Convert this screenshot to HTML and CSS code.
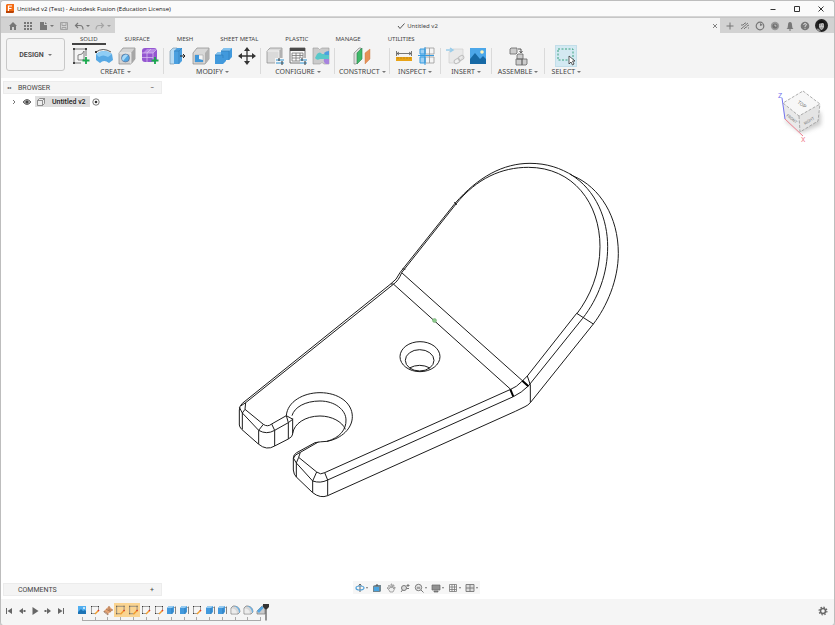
FILE: index.html
```html
<!DOCTYPE html>
<html lang="en">
<head>
<meta charset="utf-8">
<title>Untitled v2 (Test) - Autodesk Fusion (Education License)</title>
<link rel="stylesheet" href="styles.css">
</head>
<body>
<svg class="sprite" aria-hidden="true">
  <symbol id="sketch" viewBox="0 0 20 20">
    <path d="M4 3h10M3 4v12M4 17h6M15 4v6" stroke="#444" stroke-width=".7" fill="none"/>
    <path d="M7 14V9q5 0 6-4v9z" fill="none" stroke="#666" stroke-width=".8"/>
    <path d="M2 2h2v2H2zM14 2h2v2h-2zM2 16h2v2H2z" fill="#444"/>
    <path d="M15 11v7M11.500 14.500h7" stroke="#18a84c" stroke-width="1.800"/>
  </symbol>
  <symbol id="surface" viewBox="0 0 20 20">
    <path d="M2 8q8-6 16 0l1 6-4 3q-5-4-9 0l-4-3z" fill="#58a9e4"/><path d="M2 8q8-6 16 0l-4 3q-5-3-9 0z" fill="#8fcdf5"/>
    <path d="M2 6q7-5 15 0" fill="none" stroke="#333" stroke-width=".8"/><path d="M1 5h2v2H1z" fill="#333"/>
  </symbol>
  <symbol id="hole" viewBox="0 0 20 20">
    <path d="M2 7l4-5h12v11l-4 5H2z" fill="#d4d4d4" stroke="#888" stroke-width=".7"/><path d="M14 7l4-5v11l-4 5z" fill="#a6a6a6"/><path d="M2 7h12v11" fill="none" stroke="#fff" stroke-width=".6"/>
    <circle cx="8.500" cy="12" r="4" fill="#55a7e2" stroke="#557" stroke-width=".5"/><path d="M6 15a4 4 0 015-6z" fill="#a7d8f7"/>
  </symbol>
  <symbol id="form" viewBox="0 0 20 20">
    <rect x="2" y="2" width="15" height="14" rx="3" fill="#9557d1"/><path d="M3 7l4-4h9l-3 4z" fill="#b98ce6"/><path d="M2 7h11M2 11.500h11M7 7v9M13 7v9M13 7l4-4M7 7l4-4" stroke="#dcc5f2" stroke-width=".7"/>
    <path d="M15 11v7M11.500 14.500h7" stroke="#18a84c" stroke-width="1.800"/>
  </symbol>
  <symbol id="presspull" viewBox="0 0 20 20">
    <path d="M2 5l3-3h4v13l-3 3H2z" fill="#b8dbf3" stroke="#6b8ba3" stroke-width=".6"/><path d="M6 5l3-3h5v13l-3 3H6z" fill="#4a9fdf"/><path d="M6 5h5v13M11 5l3-3" fill="none" stroke="#2e78b5" stroke-width=".6"/><path d="M12 10h5M15 8l2 2-2 2" fill="none" stroke="#222" stroke-width="1"/>
  </symbol>
  <symbol id="shell" viewBox="0 0 20 20">
    <path d="M2 7l4-5h12v11l-4 5H2z" fill="#d8d8d8" stroke="#888" stroke-width=".7"/><path d="M14 7l4-5v11l-4 5z" fill="#b0b0b0"/><path d="M4 9h8v7H4z" fill="#f5f5f5" stroke="#999" stroke-width=".5"/><path d="M4 9h4v4l4 1v2H4z" fill="#3f97da"/>
  </symbol>
  <symbol id="combine" viewBox="0 0 20 20">
    <path d="M7 5l3-3h8v9l-3 3h-3v1l-3 3H1V9l3-3h3z" fill="#4199dc"/><path d="M7 5l3-3h8l-3 3zM1 9l3-3h3v3z" fill="#83c2ee"/><path d="M7 5h8v9M1 9h8v3" fill="none" stroke="#2b78b6" stroke-width=".6"/>
  </symbol>
  <symbol id="move" viewBox="0 0 20 20">
    <path d="M10 3v14M3 10h14" stroke="#333" stroke-width="1.300"/><path d="M10 1l3 4H7zM10 19l3-4H7zM1 10l4-3v6zM19 10l-4-3v6z" fill="#333"/>
  </symbol>
  <symbol id="config" viewBox="0 0 20 20">
    <path d="M2 5l3-3h12v12l-3 3H2z" fill="#dadada" stroke="#888" stroke-width=".7"/><path d="M14 5l3-3v12l-3 3z" fill="#b1b1b1"/><path d="M2 5h12v12" fill="none" stroke="#fff" stroke-width=".6"/>
    <path d="M10 12h9v7h-9z" fill="#f5f5f5"/><path d="M11 14h8M11 17h8" stroke="#2d91cf" stroke-width="1"/><path d="M14 12v3M17 15v4" stroke="#333" stroke-width="1"/>
  </symbol>
  <symbol id="table" viewBox="0 0 20 20">
    <path d="M2 2h15v15H2z" fill="#f8f8f8" stroke="#555" stroke-width=".8"/><path d="M2 2h15v3H2z" fill="#4a4a4a"/><path d="M4 7h11v8H4zM4 9.500h11M4 12h11M8 7v8M12 7v8" fill="none" stroke="#777" stroke-width=".8"/>
    <path d="M12 12h8v7h-8z" fill="#f5f5f5"/><path d="M12 14h7M12 17h7" stroke="#2d91cf" stroke-width="1"/><path d="M14 12v3M17 15v4" stroke="#333" stroke-width="1"/>
  </symbol>
  <symbol id="theme" viewBox="0 0 20 20">
    <path d="M2 2h5q1 3 4 0h7v16h-5q-2-3-4 0H2z" fill="#cbcbcb" stroke="#999" stroke-width=".6"/><path d="M6 8q3-3 5 0h7v5H9q-3 2-5-1z" fill="#58c8c9"/><path d="M13 7q2-2 5-2v4h-4z" fill="#4c9ee0"/><path d="M13 13h5v5h-3q-3-2-2-5z" fill="#a783de"/>
  </symbol>
  <symbol id="plane" viewBox="0 0 20 20">
    <path d="M2 7l5-5h2v11l-5 5H2z" fill="#ddd" stroke="#777" stroke-width=".6"/><path d="M5 7l5-5v11l-5 5z" fill="#3fb868" stroke="#25834a" stroke-width=".6"/><path d="M13 7l5-4v10l-5 5z" fill="#e79158" stroke="#c87440" stroke-width=".4"/>
  </symbol>
  <symbol id="measure" viewBox="0 0 20 20">
    <path d="M2 11h16v4H2z" fill="#e8a317"/><path d="M4 11v2M7 11v2M10 11v2M13 11v2M16 11v2" stroke="#a9780f" stroke-width=".6"/><path d="M2.500 5v5M17.500 5v5M3 7.500h14M5 6L3 7.500 5 9M15 6l2 1.500L15 9" stroke="#555" stroke-width=".8" fill="none"/>
  </symbol>
  <symbol id="inspect" viewBox="0 0 20 20">
    <path d="M3 3h5v14H3z" fill="#9fd0f3"/><path d="M8 2h9v6H8zM8 11h9v6H8zM12.500 2v15" fill="none" stroke="#999" stroke-width=".8"/><path d="M3 3h5v5H3zM3 11h5v6H3zM1 9.500h16M8 1v18" fill="none" stroke="#359be0" stroke-width="1"/>
  </symbol>
  <symbol id="link" viewBox="0 0 20 20">
    <g opacity=".5"><path d="M4 6l4-3h10v8l-4 6H4z" fill="#ddd" stroke="#aaa" stroke-width=".7"/><path d="M1 4h6M5 2l3 2-3 2" fill="none" stroke="#42a5df" stroke-width="1.500"/><rect x="9" y="13" width="6" height="4" rx="2" fill="#eee" stroke="#888" transform="rotate(-35 12 15)"/><rect x="13" y="10" width="6" height="4" rx="2" fill="none" stroke="#888" transform="rotate(-35 16 12)"/></g>
  </symbol>
  <symbol id="image" viewBox="0 0 20 20">
    <path d="M2 2h16v16H2z" fill="#4ca7e9"/><path d="M2 13l5-6 5 6 3-3 3 3v5H2z" fill="#176aa6"/><circle cx="14" cy="6" r="1.800" fill="#fff3bc"/>
  </symbol>
  <symbol id="assemble" viewBox="0 0 20 20">
    <g fill="#ccc" stroke="#666" stroke-width=".8"><path d="M2 3l1-1h6v5L8 8H2zM9 9l1-1h5v5H9zM8 13h6v6H8zM14 13h5v5l-1 1h-4z"/></g><path d="M10 3h3v3M11.500 5L13 7l1.500-2" fill="none" stroke="#333" stroke-width=".8"/>
  </symbol>
  <symbol id="select" viewBox="0 0 20 20">
    <path d="M2 3h15v11H2z" fill="none" stroke="#39a17d" stroke-width="1" stroke-dasharray="2 1.500"/><path d="M13 10v8l2-2 1.500 3 1.500-1-1.500-3H19z" fill="#fff" stroke="#333" stroke-width=".8"/>
  </symbol>

  <symbol id="t-image" viewBox="0 0 12 12"><path d="M2 2h8v8H2z" fill="#50aef0"/><path d="M2 8l3-3 2 2 2-1 1 1v3H2z" fill="#1d73b4"/><circle cx="8" cy="4" r="1" fill="#e9f6fd"/></symbol>
  <symbol id="t-sketch" viewBox="0 0 12 12"><path d="M3 2.500h6M2.500 3v6M3 9.500h3M9.500 3v3" fill="none" stroke="#777" stroke-width=".7"/><path d="M2 2h1v1H2zM9 2h1v1H9zM2 9h1v1H2z" fill="#333"/><path d="M6 10l3.500-3.500" stroke="#f19d2e" stroke-width="1.500"/><path d="M9 7l1-1" stroke="#d93b2f" stroke-width="1.500"/></symbol>
  <symbol id="t-plane" viewBox="0 0 12 12"><path d="M2 7l5-5 4 4-5 4z" fill="#e3a274"/><path d="M2 7l4 3v1L2 8zM4 5l5 3M7 2v4h4" fill="none" stroke="#9a6a4b" stroke-width=".7"/></symbol>
  <symbol id="t-extrude" viewBox="0 0 12 12"><path d="M2 4l2-2h5v6l-2 2H2z" fill="#4299dd"/><path d="M2 4l2-2h5L7 4z" fill="#97cbf0"/><path d="M7 4v6" stroke="#2670aa" stroke-width=".7"/><path d="M10.500 3v7M9.500 4l1-1.500" stroke="#555" stroke-width=".7"/></symbol>
  <symbol id="t-fillet" viewBox="0 0 12 12"><path d="M2 10V4l2-2h2q5 1 5 6l-2 2z" fill="#d6d6d6" stroke="#777" stroke-width=".7"/><path d="M5 2h1q5 1 5 6l-1 1q0-5-5-7z" fill="#69b0e5"/><path d="M2.500 4.500q5 0 5.500 5H2.500z" fill="#ececec"/></symbol>
  <symbol id="t-chamfer" viewBox="0 0 12 12"><path d="M2 7l5-5h3v8H2z" fill="#ccc" stroke="#777" stroke-width=".7"/><path d="M2 7l5-5 1.500 2L4 9z" fill="#54a8e6"/></symbol>
</svg>

<div class="window">
  <header class="titlebar">
    <svg class="app-logo" viewBox="0 0 8 9"><path d="M0 1l1-1h7v8L7 9H0z" fill="#f36b14"/><path d="M0 7h8v1L7 9H0z" fill="#b84205"/><path d="M2.500 7V2H6M2.500 4.500h3" fill="none" stroke="#fff" stroke-width="1.200"/></svg>
    <h1 class="app-title">Untitled v2 (Test) - Autodesk Fusion (Education License)</h1>
    <div class="window-controls">
      <button aria-label="Minimize"><svg viewBox="0 0 8 8"><path d="M1.500 4.500h5"/></svg></button>
      <button aria-label="Maximize"><svg viewBox="0 0 8 8"><path d="M1.500 1.500h5v5h-5z"/></svg></button>
      <button aria-label="Close"><svg viewBox="0 0 8 8"><path d="M1.500 1.500l5 5M6.500 1.500l-5 5"/></svg></button>
    </div>
  </header>

  <div class="tabbar">
    <div class="quick">
      <button aria-label="Home"><svg viewBox="0 0 10 10"><path d="M5 1L1 5h1v4h2V6h2v3h2V5h1z" fill="#777"/></svg></button>
      <button aria-label="Data panel"><svg viewBox="0 0 10 10"><path d="M1 1h2v2H1zM4 1h2v2H4zM7 1h2v2H7zM1 4h2v2H1zM4 4h2v2H4zM7 4h2v2H7zM1 7h2v2H1zM4 7h2v2H4zM7 7h2v2H7z" fill="#777"/></svg></button>
      <button class="has-menu" aria-label="File"><svg viewBox="0 0 10 10"><path d="M2 1h4v3h3v5H2zM7 1l2 2H7z" fill="#777"/></svg></button>
      <button aria-label="Save"><svg viewBox="0 0 10 10"><path d="M1.500 1.500h7v7h-7zM3 1.500v3h4v-3M3 8.500v-2h4v2" fill="none" stroke="#a2a2a2"/></svg></button>
      <button class="has-menu" aria-label="Undo"><svg viewBox="0 0 10 10"><path d="M4 2L1.500 4.500 4 7M2 4.500h4q3 0 3 4" fill="none" stroke="#777" stroke-width="1.200"/></svg></button>
      <button class="has-menu faded" aria-label="Redo"><svg viewBox="0 0 10 10"><path d="M6 2l2.500 2.500L6 7M8 4.500H4q-3 0-3 4" fill="none" stroke="#888" stroke-width="1.200"/></svg></button>
    </div>
    <div class="document-tab">
      <svg class="check" viewBox="0 0 8 8"><path d="M1 4l2 2.500L7.500 1.500" fill="none" stroke="#555"/></svg>
      <span>Untitled v2</span>
      <button class="close-tab" aria-label="Close tab"><svg viewBox="0 0 6 6"><path d="M1 1l4 4M5 1L1 5" stroke="#666" stroke-width=".8"/></svg></button>
    </div>
    <div class="account">
      <button aria-label="New tab"><svg viewBox="0 0 10 10"><path d="M5 1.500v7M1.500 5h7" stroke="#777" fill="none"/></svg></button>
      <button aria-label="Offline"><svg viewBox="0 0 10 10"><path d="M1 4h2l2-2h1M1 8l7-6M4 8l2-2h1M7 5l2-1M8 7h1" stroke="#777" fill="none"/></svg></button>
      <button aria-label="Extensions"><svg viewBox="0 0 10 10"><circle cx="5" cy="5" r="3.800" fill="none" stroke="#777" stroke-width="1.200"/><path d="M5 5V2l3 2z" fill="#777"/></svg></button>
      <button aria-label="Job status"><svg viewBox="0 0 10 10"><circle cx="5" cy="5" r="4.200" fill="#999"/><circle cx="5" cy="5" r="2.600" fill="#707070"/><path d="M5 3.500V5h1.500" stroke="#ddd" stroke-width=".8" fill="none"/></svg></button>
      <button aria-label="Notifications"><svg viewBox="0 0 10 10"><path d="M1.500 8q1.500-1 1.500-4 0-3 2-3t2 3q0 3 1.500 4zM4 8.500h2v1H4z" fill="#777"/></svg></button>
      <button aria-label="Help"><svg viewBox="0 0 10 10"><circle cx="5" cy="5" r="4.300" fill="#777"/><path d="M3.700 4q0-1.500 1.400-1.500T6.400 4Q6.300 4.600 5 5.200V6M5 6.800v1" stroke="#e5e5e5" fill="none" stroke-width=".9"/></svg></button>
      <button class="avatar" aria-label="Profile"><svg viewBox="0 0 13 13"><circle cx="6.500" cy="6.500" r="6.500" fill="#222"/><path d="M4 4q2-2 5 0v4q-1 3-2.500 3T4 8z" fill="#c2c2c2"/><path d="M3 5q0-4 4-3.500Q10 2 10 6L8 4z" fill="#111"/><path d="M4.500 6h1.500M7 6h1.500M5.500 9h2" stroke="#444" stroke-width=".6"/><path d="M1 10q2-1 3 0l2 2.500Q3 13 1 10z" fill="#888"/></svg></button>
    </div>
  </div>

  <div class="ribbon">
    <button class="workspace">DESIGN<i class="caret"></i></button>
    <div class="ribbon-main">
      <nav class="ribbon-tabs">
        <a class="active" href="#">SOLID</a><a href="#">SURFACE</a><a href="#">MESH</a><a href="#">SHEET METAL</a><a href="#">PLASTIC</a><a href="#">MANAGE</a><a href="#">UTILITIES</a>
      </nav>
      <div class="tool-groups">
        <section class="group"><div class="tools"><button aria-label="Sketch"><svg><use href="#sketch"/></svg></button><button aria-label="Revolve"><svg><use href="#surface"/></svg></button><button aria-label="Hole"><svg><use href="#hole"/></svg></button><button aria-label="Form"><svg><use href="#form"/></svg></button></div><button class="label">CREATE<i class="caret"></i></button></section>
        <section class="group"><div class="tools"><button aria-label="Press pull"><svg><use href="#presspull"/></svg></button><button aria-label="Shell"><svg><use href="#shell"/></svg></button><button aria-label="Combine"><svg><use href="#combine"/></svg></button><button aria-label="Move"><svg><use href="#move"/></svg></button></div><button class="label">MODIFY<i class="caret"></i></button></section>
        <section class="group"><div class="tools"><button aria-label="Configure model"><svg><use href="#config"/></svg></button><button aria-label="Configuration table"><svg><use href="#table"/></svg></button><button aria-label="Theme table"><svg><use href="#theme"/></svg></button></div><button class="label">CONFIGURE<i class="caret"></i></button></section>
        <section class="group single"><div class="tools"><button aria-label="Offset plane"><svg><use href="#plane"/></svg></button></div><button class="label">CONSTRUCT<i class="caret"></i></button></section>
        <section class="group"><div class="tools"><button aria-label="Measure"><svg><use href="#measure"/></svg></button><button aria-label="Section"><svg><use href="#inspect"/></svg></button></div><button class="label">INSPECT<i class="caret"></i></button></section>
        <section class="group"><div class="tools"><button aria-label="Insert derive"><svg><use href="#link"/></svg></button><button aria-label="Canvas"><svg><use href="#image"/></svg></button></div><button class="label">INSERT<i class="caret"></i></button></section>
        <section class="group single"><div class="tools"><button aria-label="Joint"><svg><use href="#assemble"/></svg></button></div><button class="label">ASSEMBLE<i class="caret"></i></button></section>
        <section class="group last"><div class="tools"><button class="selected" aria-label="Select"><svg><use href="#select"/></svg></button></div><button class="label">SELECT<i class="caret"></i></button></section>
      </div>
    </div>
  </div>

  <main class="viewport">
    <svg class="model" viewBox="1 78 833 521" role="img" aria-label="Bracket model">
      <g class="edges">
        <!-- feet and open slot -->
        <g transform="translate(225 370) scale(.33333)">
          <path d="M497 -258L52 100Q43 108 43 120V165Q43 170 50 178L100 222Q125 243 149 228L190 207Q203 200 203 192V145"/>
          <path d="M505 -257L62 98L47 108M62 98L60 118L115 163Q128 172 140 162L184 137"/>
          <path d="M43 112L52 129L101 181Q125 195 149 181L190 158L203 148M60 118L52 129V178M115 163L101 181V222M140 162L149 181V228M184 137L190 158V207M184 137L202 147"/>
          <path d="M184 137C187 95 235 68 285 68C340 68 382 98 382 140C382 175 350 206 306 214Q285 215 270 218L215 248Q205 254 205 264V300Q206 314 215 322L263 368Q286 386 308 377L871 124"/>
          <path d="M201 137C208 112 240 93 285 93C330 93 363 120 363 150C364 178 345 203 306 214"/>
          <path d="M203 190C207 162 240 138 285 138C320 138 352 155 361 178"/>
          <path d="M280 216L226 247L221 262L275 306Q287 316 299 308L857 58M206 264Q207 255 226 247M205 264L214 279L263 333Q286 341 308 330L865 80M221 262L214 279V322M275 306L263 333V368M299 308L308 330V377"/>
        </g>
        <!-- bend and straight edges -->
        <g transform="translate(370 250) scale(.33333)">
          <path d="M255 -140L100 55L90 68Q80 90 62 102M258 -138L95 68Q86 92 70 103M98 56L106 58"/>
          <path d="M95 68L475 408M62 102H70L422 418"/>
          <path d="M422 418Q440 411 455 395L472 378L620 190L670 222M430 440Q455 428 475 408L638 205M472 378L481 405V458L670 222M481 458Q474 466 465 470L436 484"/>
          <path class="strong" d="M457 392L475 409M421 418L430 440"/>
          <ellipse cx="150" cy="320" rx="60" ry="45"/><ellipse cx="149" cy="331" rx="43" ry="32"/><path d="M118 354Q149 338 180 354"/>
        </g>
        <!-- rounded end -->
        <g transform="translate(430 150) scale(.33333)">
          <path d="M75 160C145 80 220 40 300 40C350 40 392 54 430 78C510 112 565 200 565 310C565 390 530 470 490 522"/>
          <path d="M78 162C140 85 215 52 295 52C430 52 510 160 510 290C510 370 480 440 440 492"/>
          <path d="M420 72C500 120 533 210 533 290C533 370 505 445 458 505M73 156L80 165"/>
        </g>
      </g>
      <circle cx="434.500" cy="320.500" r="2" fill="#8dca8d" stroke="#6ba86b" stroke-width=".5"/>
    </svg>

    <aside class="browser">
      <div class="panel-head"><span class="collapse">◂◂</span><h2>BROWSER</h2><button aria-label="Minimize browser">−</button></div>
      <div class="tree-row">
        <svg class="chevron" viewBox="0 0 6 8"><path d="M2 2l2 2-2 2" fill="none" stroke="#555" stroke-width=".8"/></svg>
        <svg class="eye" viewBox="0 0 10 8"><path d="M1 4q4-5 8 0-4 5-8 0z" fill="#aaa" stroke="#666"/><circle cx="5" cy="4" r="1.500" fill="#444"/></svg>
        <span class="component"><svg viewBox="0 0 10 10"><path d="M1.500 3.500l2-2h5v5l-2 2h-5zM1.500 3.500h5v5M6.500 3.500l2-2" fill="#eee" stroke="#777" stroke-width=".8"/></svg>Untitled v2</span>
        <svg class="target" viewBox="0 0 8 8"><circle cx="4" cy="4" r="3.200" fill="#fff" stroke="#555" stroke-width=".8"/><circle cx="4" cy="4" r="1.300" fill="#333"/></svg>
      </div>
    </aside>

    <svg class="viewcube" viewBox="0 0 50 60" role="img" aria-label="View cube">
      <defs><filter id="soft"><feGaussianBlur stdDeviation="2"/></filter></defs>
      <path d="M10 36L26 48L46 40V28L26 20z" fill="#aaa" opacity=".6" filter="url(#soft)"/>
      <path d="M8 18L24 31L25 47L9 34z" fill="#e9e9e9"/><path d="M24 31L45 19L43 36L25 47z" fill="#e4e4e4"/><path d="M28 6L45 19L24 31L8 18z" fill="#f7f7f7"/>
      <path d="M28 6L45 19L24 31L8 18zM24 31L25 47L43 36L45 19" fill="none" stroke="#999" stroke-width=".8" stroke-dasharray="3 1.500"/>
      <path d="M7 13L10 34" stroke="#7474ef"/><path d="M10 34L28 51" stroke="#ef8090"/>
      <text x="3" y="13" class="z">Z</text><text x="26" y="57" class="x">X</text>
      <text class="face" transform="translate(22 18) rotate(36)">TOP</text><text class="face small" transform="translate(11 31) rotate(38)">FRONT</text><text class="face small" transform="translate(30 40) rotate(-32)">RIGHT</text>
    </svg>

    <aside class="comments panel-head"><h2>COMMENTS</h2><button aria-label="Add comment">+</button></aside>

    <div class="navbar">
      <button class="has-menu" aria-label="Orbit"><svg viewBox="0 0 10 10"><path d="M5 1v8M3.500 2.500L5 1l1.500 1.500" fill="none" stroke="#666"/><ellipse cx="5" cy="5" rx="4" ry="2" fill="none" stroke="#4d9ed8" stroke-width="1.200"/></svg></button>
      <button aria-label="Look at"><svg viewBox="0 0 10 10"><path d="M1 3l2-1h6v6L8 9H1z" fill="#71858f"/><path d="M2 4h5v4H2z" fill="#48a4e1"/><path d="M5 1v2" stroke="#444"/></svg></button>
      <button aria-label="Pan"><svg viewBox="0 0 10 10"><path d="M3 7L1 5l1-.5L3.500 6 2.500 2.500h1L5 5V1h1v4l1-3h1L7.500 6 9 4v1L7 9H4z" fill="#eee" stroke="#888" stroke-width=".7"/></svg></button>
      <button aria-label="Zoom"><svg viewBox="0 0 10 10"><circle cx="4" cy="5" r="2.500" fill="#ddd" stroke="#777"/><path d="M2.500 7L1 9M8 1v3M6.500 2.500h3M7 5.500h2" stroke="#777"/></svg></button>
      <button class="has-menu" aria-label="Fit"><svg viewBox="0 0 10 10"><circle cx="4.500" cy="4.500" r="3.200" fill="#eee" stroke="#777"/><path d="M7 7l2.500 2.500" stroke="#777"/><path d="M3 4h3v1.500H3z" fill="#aaa" stroke="#888" stroke-width=".5"/></svg></button>
      <button class="has-menu" aria-label="Display"><svg viewBox="0 0 10 10"><path d="M1 2h8v5H1zM3 8h4v1H3z" fill="#929292" stroke="#666" stroke-width=".7"/></svg></button>
      <button class="has-menu" aria-label="Grid"><svg viewBox="0 0 10 10"><path d="M1.500 1.500h7v7h-7zM4 1.500v7M6.500 1.500v7M1.500 4h7M1.500 6.500h7" fill="none" stroke="#777" stroke-width=".8"/></svg></button>
      <button class="has-menu" aria-label="Viewports"><svg viewBox="0 0 10 10"><path d="M1 1.500h8v7H1zM5 1.500v7M1 5h8" fill="#ddd" stroke="#777" stroke-width=".9"/></svg></button>
    </div>
  </main>

  <footer class="timeline">
    <div class="playback">
      <button aria-label="First"><svg viewBox="0 0 8 8"><path d="M1 1h1v6H1zM7 1v6L2.500 4z"/></svg></button>
      <button aria-label="Previous"><svg viewBox="0 0 8 8"><path d="M5 1v6L1 4zM5.500 3H7.500v2h-2z"/></svg></button>
      <button aria-label="Play"><svg viewBox="0 0 8 8"><path d="M1.500 0l6 4-6 4z"/></svg></button>
      <button aria-label="Next"><svg viewBox="0 0 8 8"><path d="M3 1v6l4-3zM.5 3h2v2h-2z"/></svg></button>
      <button aria-label="Last"><svg viewBox="0 0 8 8"><path d="M1 1v6l4.500-3zM6 1h1v6H6z"/></svg></button>
    </div>
    <ol class="features">
      <li><svg><use href="#t-image"/></svg></li><li><svg><use href="#t-sketch"/></svg></li><li><svg><use href="#t-plane"/></svg></li><li class="hot"><svg><use href="#t-sketch"/></svg></li><li class="hot"><svg><use href="#t-sketch"/></svg></li><li><svg><use href="#t-sketch"/></svg></li><li><svg><use href="#t-sketch"/></svg></li><li><svg><use href="#t-extrude"/></svg></li><li><svg><use href="#t-extrude"/></svg></li><li><svg><use href="#t-sketch"/></svg></li><li><svg><use href="#t-extrude"/></svg></li><li><svg><use href="#t-extrude"/></svg></li><li><svg><use href="#t-fillet"/></svg></li><li><svg><use href="#t-fillet"/></svg></li><li><svg><use href="#t-chamfer"/></svg></li>
    </ol>
    <svg class="marker" viewBox="0 0 8 18"><path d="M1 1h6v3L4.500 6.500v11h-1v-11L1 4z" fill="#333"/></svg>
    <button class="settings" aria-label="Timeline settings"><svg viewBox="0 0 10 10"><circle cx="5" cy="5" r="2.500" fill="none" stroke="#666" stroke-width="1.500"/><circle cx="5" cy="5" r="3.900" fill="none" stroke="#666" stroke-width="1.200" stroke-dasharray="1.500 1.560"/></svg></button>
  </footer>
</div>
</body>
</html>
```
FILE: styles.css
```css
* { box-sizing: border-box; }
body { margin: 0; font: 7px/10px Roboto, sans-serif; color: #444; background: #ccc; }
button { display: flex; align-items: center; justify-content: center; margin: 0; padding: 0; border: 0; background: none; color: inherit; font: inherit; }
svg { display: block; }
a { color: inherit; text-decoration: none; }
h1, h2 { margin: 0; font: inherit; }
.sprite { position: absolute; width: 0; height: 0; }

.window { display: flex; flex-direction: column; min-height: 100vh; border: 1px solid #bdbdbd; border-bottom-width: 0; border-radius: 4px; background: #f5f5f5; overflow: hidden; }

.titlebar { display: flex; align-items: center; gap: 3px; height: 16px; padding: 0 9px 0 5px; background: #fafafa; border-bottom: 1px solid #d5d5d5; }
.app-logo { width: 8px; height: 9px; }
.app-title { color: #111; font: 6px/10px "Open Sans", sans-serif; }
.window-controls { display: flex; gap: 16px; margin-left: auto; }
.window-controls svg { width: 8px; height: 8px; fill: none; stroke: #333; stroke-width: 1; }

.tabbar { display: flex; height: 16px; background: #d2d2d2; border-top: 1px solid #c6c6c6; }
.quick { display: flex; align-items: center; gap: 5px; width: 114px; padding-left: 7px; }
.quick svg, .account svg { width: 10px; height: 10px; }
.has-menu::after { content: ""; border: 2px solid transparent; border-top-color: #777; border-bottom: 0; margin-left: 2px; }
.faded { opacity: .6; }
.document-tab { flex: 1; display: flex; align-items: center; justify-content: center; gap: 2px; position: relative; background: #f4f4f4; font: 6px/10px "Noto Sans", sans-serif; }
.check { width: 8px; height: 8px; }
.close-tab { position: absolute; right: 2px; top: 5px; }
.close-tab svg { width: 6px; height: 6px; }
.account { display: flex; align-items: center; gap: 5px; padding: 0 6px 0 5px; }
.account .avatar svg { width: 13px; height: 13px; }

.ribbon { display: flex; height: 45px; padding-left: 5px; background: #f4f4f4; }
.workspace { align-self: flex-start; width: 59px; height: 33px; margin-top: 5px; border: 1px solid #c8c8c8; border-radius: 3px; font-weight: 600; gap: 2px; }
.caret { display: inline-block; margin-left: 2px; border: 2px solid transparent; border-top-color: #777; border-bottom: 0; }
.ribbon-main { margin-left: 2px; }
.ribbon-tabs { display: flex; gap: 27px; height: 12px; padding: 1px 0 0 13px; font: 6px/10px "Noto Sans", sans-serif; }
.ribbon-tabs .active { border-bottom: 2px solid #444; padding: 0 8px; margin: 0 -8px; }
.tool-groups { display: flex; height: 31px; }
.group { display: flex; flex-direction: column; align-items: center; padding: 0 4px; position: relative; }
.group:not(:last-child)::after { content: ""; position: absolute; right: 0; top: 3px; bottom: 2px; border-right: 1px solid #dadada; }
.group.single { min-width: 53px; }
.group.last { padding-left: 7px; }
.tools { display: flex; gap: 3px; height: 22px; align-items: center; }
.tools svg { width: 20px; height: 20px; }
.tools .selected { background: #d3e9f2; outline: 1px solid #c2dee9; }
.label { height: 9px; white-space: nowrap; font: 7px/9px "Noto Sans", sans-serif; }

.viewport { flex: 1; position: relative; display: grid; background: #fff; min-height: 300px; }
.model { width: 100%; height: 100%; }
.edges path, .edges ellipse { fill: none; stroke: #1c1c1c; stroke-width: 1; vector-effect: non-scaling-stroke; }
.edges .strong { stroke: #000; stroke-width: 2; }
.browser { position: absolute; left: 2px; top: 3px; width: 159px; }
.panel-head { display: flex; align-items: center; height: 13px; padding: 0 5px 0 3px; background: #f4f4f4; border: 1px solid #ececec; }
.panel-head button { width: 8px; margin-left: auto; }
.collapse { width: 11px; font-size: 4px; }
.tree-row { display: flex; align-items: center; height: 15px; padding-left: 8px; }
.chevron { width: 6px; height: 8px; }
.eye { width: 10px; height: 8px; margin: 0 3px 0 5px; }
.component { display: flex; align-items: center; gap: 6px; height: 11px; padding: 0 4px 0 1px; background: #dedede; color: #222; font-weight: 500; }
.component svg { width: 10px; height: 10px; }
.target { width: 8px; height: 8px; margin-left: 2px; }
.viewcube { position: absolute; right: 9px; top: 7px; width: 50px; height: 60px; }
.viewcube text { font: 7px Roboto, sans-serif; }
.viewcube .z { fill: #7272ed; }
.viewcube .x { fill: #ef7c8e; }
.viewcube .face { font-size: 5px; fill: #777; }
.viewcube .small { font-size: 4px; }
.comments { position: absolute; left: 2px; bottom: 3px; width: 159px; padding-left: 14px; }
.navbar { position: absolute; left: 50%; bottom: 5px; display: flex; align-items: center; gap: 4px; height: 13px; margin-left: -65px; padding: 0 2px; background: #f6f6f6; }
.navbar svg { width: 10px; height: 10px; }
.navbar .has-menu::after { border-width: 2px 1px 0; margin-left: 1px; }

.timeline { display: flex; align-items: flex-start; height: 26px; padding: 4px 6px 0 4px; background: #f5f5f5; }
.playback { display: flex; gap: 5px; height: 16px; align-items: center; }
.playback svg { width: 8px; height: 8px; fill: #666; }
.features { display: grid; grid-template-columns: repeat(15, 1fr); width: 191px; margin: 0 0 0 11px; padding: 0; list-style: none; }
.features li { display: flex; flex-direction: column; align-items: center; }
.features svg { width: 12px; height: 14px; }
.features .hot svg { width: 100%; background: #fad491; }
.features li::after { content: ""; width: 100%; height: 3px; border-bottom: 1px solid #aaa; background: linear-gradient(#aaa, #aaa) center / 1px 3px no-repeat; }
.features li:first-child::after { width: 50%; align-self: flex-end; background-position: left; }
.features li:last-child::after { width: 50%; align-self: flex-start; background-position: right; }
.marker { width: 8px; height: 18px; margin-left: -5px; }
.settings { height: 16px; margin-left: auto; }
.settings svg { width: 10px; height: 10px; }
```
